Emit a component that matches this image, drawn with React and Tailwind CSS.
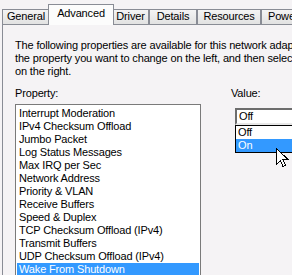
import React from "react";

const items = [
  "Interrupt Moderation",
  "IPv4 Checksum Offload",
  "Jumbo Packet",
  "Log Status Messages",
  "Max IRQ per Sec",
  "Network Address",
  "Priority & VLAN",
  "Receive Buffers",
  "Speed & Duplex",
  "TCP Checksum Offload (IPv4)",
  "Transmit Buffers",
  "UDP Checksum Offload (IPv4)",
  "Wake From Shutdown",
];

function Tab({ label, w, selected }) {
  if (selected) {
    return (
      <div
        className={`relative z-10 -mx-[2px] -mb-[1px] h-[21px] ${w} shrink-0 border border-b-0 border-[#898c95] bg-[#fcfcfc] pt-[2px] text-center leading-[13px]`}
      >
        {label}
      </div>
    );
  }
  return (
    <div
      className={`h-[15px] ${w} shrink-0 border border-b-0 border-[#898c95] bg-gradient-to-b from-[#f4f4f4] to-[#e2e2e2] text-center leading-[13px]`}
    >
      {label}
    </div>
  );
}

function Cursor() {
  return (
    <svg
      className="absolute left-[276px] top-[148px] z-20"
      width="13"
      height="21"
      viewBox="0 0 13 21"
    >
      <path
        d="M0.5 0.5 L0.5 16.5 L4.5 12.5 L7 18.5 L9.5 17.5 L7 11.5 L12 11.5 Z"
        fill="#fff"
        stroke="#000"
        strokeWidth="1"
        shapeRendering="crispEdges"
      />
    </svg>
  );
}

export default function App() {
  return (
    <div className="relative h-[275px] w-[292px] overflow-hidden bg-[#f5f3f5] font-['Liberation_Sans',Arial,sans-serif] text-[11px] leading-[13px] tracking-[-0.15px] text-black">
      <div className="flex h-[24px] items-end pl-[2px]">
        <Tab label="General" w="w-[48px]" />
        <Tab label="Advanced" w="w-[66px]" selected />
        <Tab label="Driver" w="w-[37px]" />
        <Tab label="Details" w="w-[48px]" />
        <Tab label="Resources" w="w-[64px]" />
        <Tab label="Power Management" w="w-[110px]" />
      </div>
      <div className="ml-[2px] h-[260px] border-l border-t border-[#898c95] bg-[#f5f3f5] pl-[12px] pt-[14px]">
        <p className="whitespace-nowrap">
          The following properties are available for this network adapter. Click
          <br />
          the property you want to change on the left, and then select its value
          <br />
          on the right.
        </p>
        <div className="mt-[9px] flex">
          <div className="w-[186px] shrink-0">
            <div>Property:</div>
            <div className="mt-[4px] h-[200px] border border-[#7a7a7a] bg-white pt-[2px] pl-[1px] pr-[1px]">
              {items.map((it, i) => (
                <div
                  key={it}
                  className={`h-[13px] whitespace-nowrap pl-[2px] ${
                    i === items.length - 1 ? "bg-[#3399ff] text-white" : ""
                  }`}
                >
                  {it}
                </div>
              ))}
            </div>
          </div>
          <div className="ml-[30px] shrink-0">
            <div>Value:</div>
            <div className="ml-[4px] mt-[8px] h-[17px] w-[80px] border-2 border-t-[#6d6d6d] border-l-[#6d6d6d] border-r-[#e0e0e0] border-b-[#e8e8e8] bg-white pl-[2px] leading-[13px]">
              Off
            </div>
            <div className="ml-[4px] w-[80px] border border-black bg-white">
              <div className="h-[13px] pl-[2px]">Off</div>
              <div className="h-[13px] bg-[#3399ff] pl-[2px] text-white">On</div>
            </div>
          </div>
        </div>
      </div>
      <Cursor />
    </div>
  );
}
